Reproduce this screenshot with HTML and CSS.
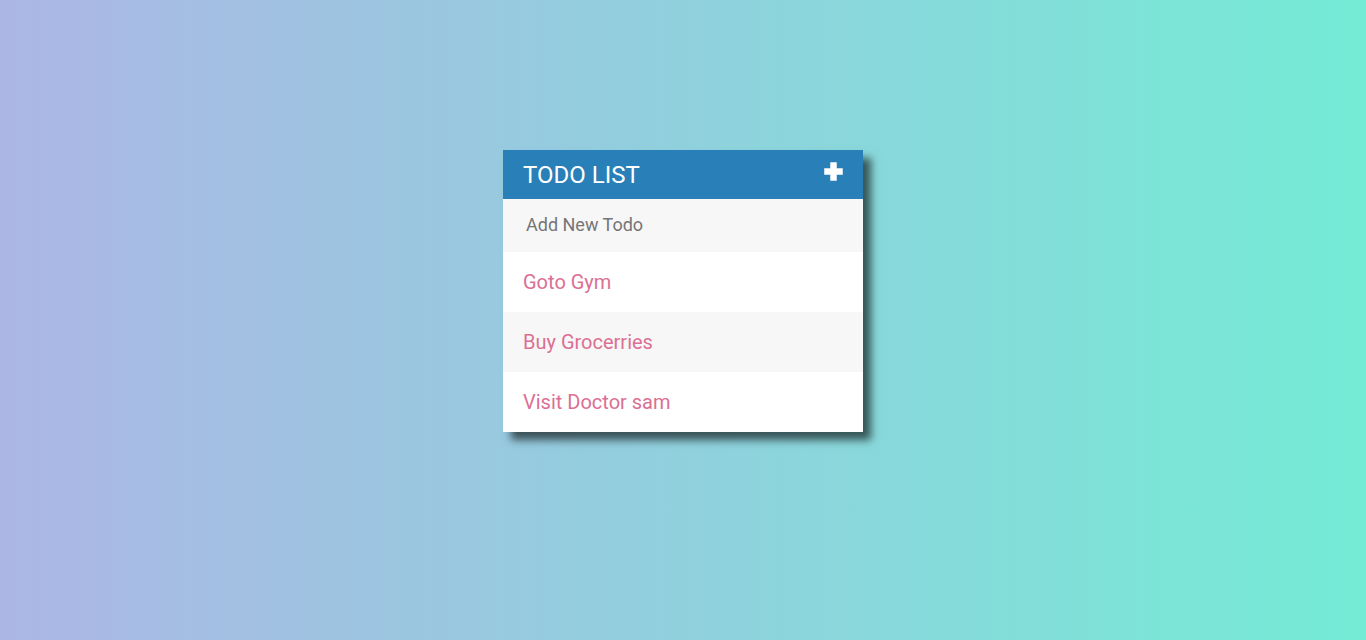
FILE: index.html
```html
<!DOCTYPE html>
<html>
<head>
<meta charset="utf-8">
<title>Todo List</title>
<link rel="stylesheet" href="styles.css">
</head>
<body>
<div class="container">
  <h1 class="title">Todo List <span class="add"><svg width="19" height="19" viewBox="0 0 19 19"><path d="M6.5 0.5h6v6h6v6h-6v6h-6v-6h-6v-6h6z" fill="#fff" stroke="#fff" stroke-width="0.5" stroke-linejoin="round"/></svg></span></h1>
  <input class="new-todo" type="text" placeholder="Add New Todo">
  <ul class="todos">
    <li class="todo">Goto Gym</li>
    <li class="todo">Buy Grocerries</li>
    <li class="todo">Visit Doctor sam</li>
  </ul>
</div>
</body>
</html>
```

FILE: styles.css
```css
html, body {
  margin: 0;
  height: 100%;
}
body {
  background: linear-gradient(to right, #acb6e5, #74ebd5);
  font-family: Roboto, "Liberation Sans", sans-serif;
}
.container {
  width: 360px;
  margin: 0 auto;
  position: relative;
  top: 150px;
  background: #f7f7f7;
  box-shadow: 8px 8px 8px rgba(0, 0, 0, 0.6);
}
.title {
  margin: 0;
  background: #2980b9;
  color: #fff;
  font-size: 24px;
  font-weight: normal;
  text-transform: uppercase;
  padding: 11px 20px 9px;
  line-height: 29px;
  display: flex;
  justify-content: space-between;
  align-items: center;
}
.add {
  display: flex;
  margin-top: -8px;
}
.new-todo {
  display: block;
  width: 100%;
  box-sizing: border-box;
  font-family: Roboto, "Liberation Sans", sans-serif;
  font-size: 18px;
  line-height: 21px;
  height: 53px;
  padding: 12px 13px 14px 20px;
  border: 3px solid transparent;
  background: #f7f7f7;
  color: #2980b9;
  outline: none;
}
.new-todo::placeholder {
  color: #757575;
}
.todos {
  list-style: none;
  margin: 0;
  padding: 0;
}
.todo {
  background: #fff;
  height: 60px;
  line-height: 60px;
  padding-left: 20px;
  font-size: 20px;
  color: #db7093;
}
.todo:nth-child(2n) {
  background: #f7f7f7;
}
```
